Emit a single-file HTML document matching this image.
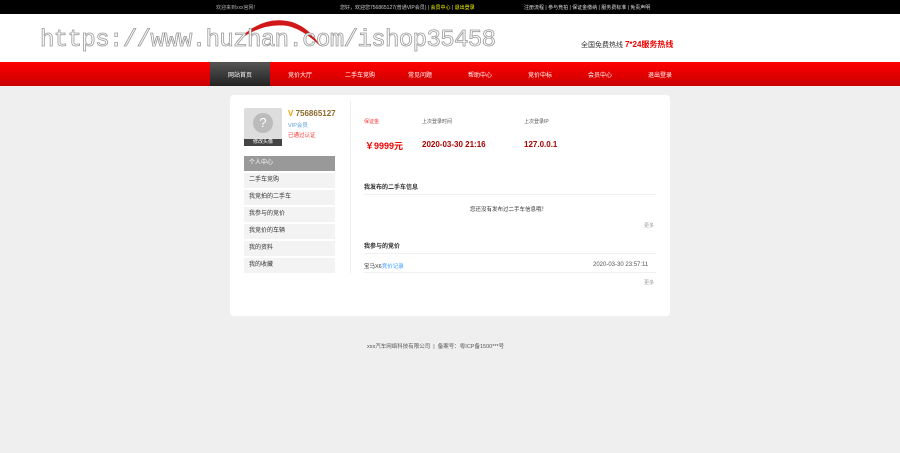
<!DOCTYPE html>
<html><head><meta charset="utf-8"><style>
*{margin:0;padding:0;box-sizing:border-box}
body{width:900px;height:453px;background:#efefef;font-family:"Liberation Sans","Noto Sans CJK SC",sans-serif;font-size:6px;color:#333;position:relative;overflow:hidden}
.a{position:absolute;white-space:nowrap}
</style></head><body>
<div class="a" style="left:0;top:0;width:900px;height:14px;background:#000"></div>
<div class="a" style="left:216px;top:4px;color:#aaa;font-size:5px">欢迎来到xxx官网！</div>
<div class="a" style="left:340px;top:4px;color:#ccc;font-size:5px">您好，欢迎您756865127(普通VIP会员) | <span style="color:#ff0">会员中心</span> | <span style="color:#ff0">退出登录</span></div>
<div class="a" style="left:524px;top:4px;color:#ddd;font-size:5px">注册流程 | 参与竞拍 | 保证金缴纳 | 服务费标准 | 免责声明</div>
<div class="a" style="left:0;top:14px;width:900px;height:48px;background:#fff"></div>
<svg class="a" style="left:232px;top:16px" width="90" height="34"><path d="M4 26 Q30 -2 60 6 Q78 12 88 30 Q72 14 56 10 Q30 6 4 26Z" fill="#d01818"/></svg>
<div class="a" style="left:40px;top:27px;font-family:'Liberation Mono',monospace;font-size:24px;color:#fff;-webkit-text-stroke:0.8px #999;letter-spacing:-0.6px">https://www.huzhan.com/ishop35458</div>
<div class="a" style="left:581px;top:39px;font-size:7px;color:#333">全国免费热线 <b style="color:#e00;font-size:8px">7*24服务热线</b></div>
<div class="a" style="left:0;top:62px;width:900px;height:24px;background:linear-gradient(#f00,#c80000)"></div>
<div class="a" style="left:210px;top:62px;width:60px;height:24px;background:linear-gradient(#555,#222)"></div>
<div class="a" style="left:210px;top:70px;width:480px;display:flex;color:#fff;font-size:6px">
<span style="width:60px;text-align:center">网站首页</span><span style="width:60px;text-align:center">竞价大厅</span><span style="width:60px;text-align:center">二手车竞购</span><span style="width:60px;text-align:center">常见问题</span><span style="width:60px;text-align:center">帮助中心</span><span style="width:60px;text-align:center">竞价中标</span><span style="width:60px;text-align:center">会员中心</span><span style="width:60px;text-align:center">退出登录</span></div>
<div class="a" style="left:230px;top:95px;width:440px;height:221px;background:#fff;border-radius:4px"></div>
<div class="a" style="left:244px;top:108px;width:38px;height:38px;background:#ddd;border-radius:2px"></div>
<div class="a" style="left:253px;top:113px;width:20px;height:20px;border-radius:50%;background:#bbb;color:#fff;font-size:13px;text-align:center;line-height:20px">?</div>
<div class="a" style="left:244px;top:139px;width:38px;height:7px;background:#444;color:#fff;font-size:5px;text-align:center;line-height:7px">修改头像</div>
<div class="a" style="left:288px;top:109px;font-size:8px;color:#8b6a2a;font-weight:bold"><span style="color:#f0a000">V</span> 756865127</div>
<div class="a" style="left:288px;top:121px;color:#5aa0d8;font-size:5.5px">VIP会员</div>
<div class="a" style="left:288px;top:131px;color:#f33;font-size:5.5px">已通过认证</div>
<div class="a" style="left:244px;top:156px;width:91px;height:15px;background:#999;color:#fff;font-size:6px;line-height:15px;padding-left:5px">个人中心</div>
<div class="a" style="left:244px;top:173px;width:91px">
<div style="height:15px;background:#f3f3f3;margin-bottom:2px;line-height:15px;padding-left:5px">二手车竞购</div>
<div style="height:15px;background:#f3f3f3;margin-bottom:2px;line-height:15px;padding-left:5px">我竞拍的二手车</div>
<div style="height:15px;background:#f3f3f3;margin-bottom:2px;line-height:15px;padding-left:5px">我参与的竞价</div>
<div style="height:15px;background:#f3f3f3;margin-bottom:2px;line-height:15px;padding-left:5px">我竞价的车辆</div>
<div style="height:15px;background:#f3f3f3;margin-bottom:2px;line-height:15px;padding-left:5px">我的资料</div>
<div style="height:15px;background:#f3f3f3;line-height:15px;padding-left:5px">我的收藏</div></div>
<div class="a" style="left:350px;top:101px;width:1px;height:172px;background:#eee"></div>
<div class="a" style="left:364px;top:118px;color:#f33;font-size:5px">保证金</div>
<div class="a" style="left:422px;top:118px;color:#555;font-size:5px">上次登录时间</div>
<div class="a" style="left:524px;top:118px;color:#555;font-size:5px">上次登录IP</div>
<div class="a" style="left:365px;top:139px;color:#e00;font-size:9px;font-weight:bold">￥9999元</div>
<div class="a" style="left:422px;top:140px;color:#a00;font-size:8px;font-weight:bold">2020-03-30 21:16</div>
<div class="a" style="left:524px;top:140px;color:#a00;font-size:8px;font-weight:bold">127.0.0.1</div>
<div class="a" style="left:364px;top:182px;font-weight:bold;font-size:6px">我发布的二手车信息</div>
<div class="a" style="left:364px;top:194px;width:292px;height:1px;background:#f0f0f0"></div>
<div class="a" style="left:470px;top:205px;font-size:5.5px">您还没有发布过二手车信息哦！</div>
<div class="a" style="left:644px;top:222px;color:#999;font-size:5px">更多</div>
<div class="a" style="left:364px;top:241px;font-weight:bold;font-size:6px">我参与的竞价</div>
<div class="a" style="left:364px;top:253px;width:292px;height:1px;background:#f0f0f0"></div>
<div class="a" style="left:364px;top:262px;font-size:5.5px">宝马X6<span style="color:#39f">竞价记录</span></div>
<div class="a" style="left:593px;top:262px;color:#555;font-size:6px">2020-03-30 23:57:11</div>
<div class="a" style="left:364px;top:272px;width:292px;height:1px;background:#f0f0f0"></div>
<div class="a" style="left:644px;top:279px;color:#999;font-size:5px">更多</div>
<div class="a" style="left:367px;top:342px;color:#555;font-size:5.5px">xxx汽车网络科技有限公司 &nbsp;|&nbsp; 备案号：粤ICP备1500***号</div>
</body></html>
